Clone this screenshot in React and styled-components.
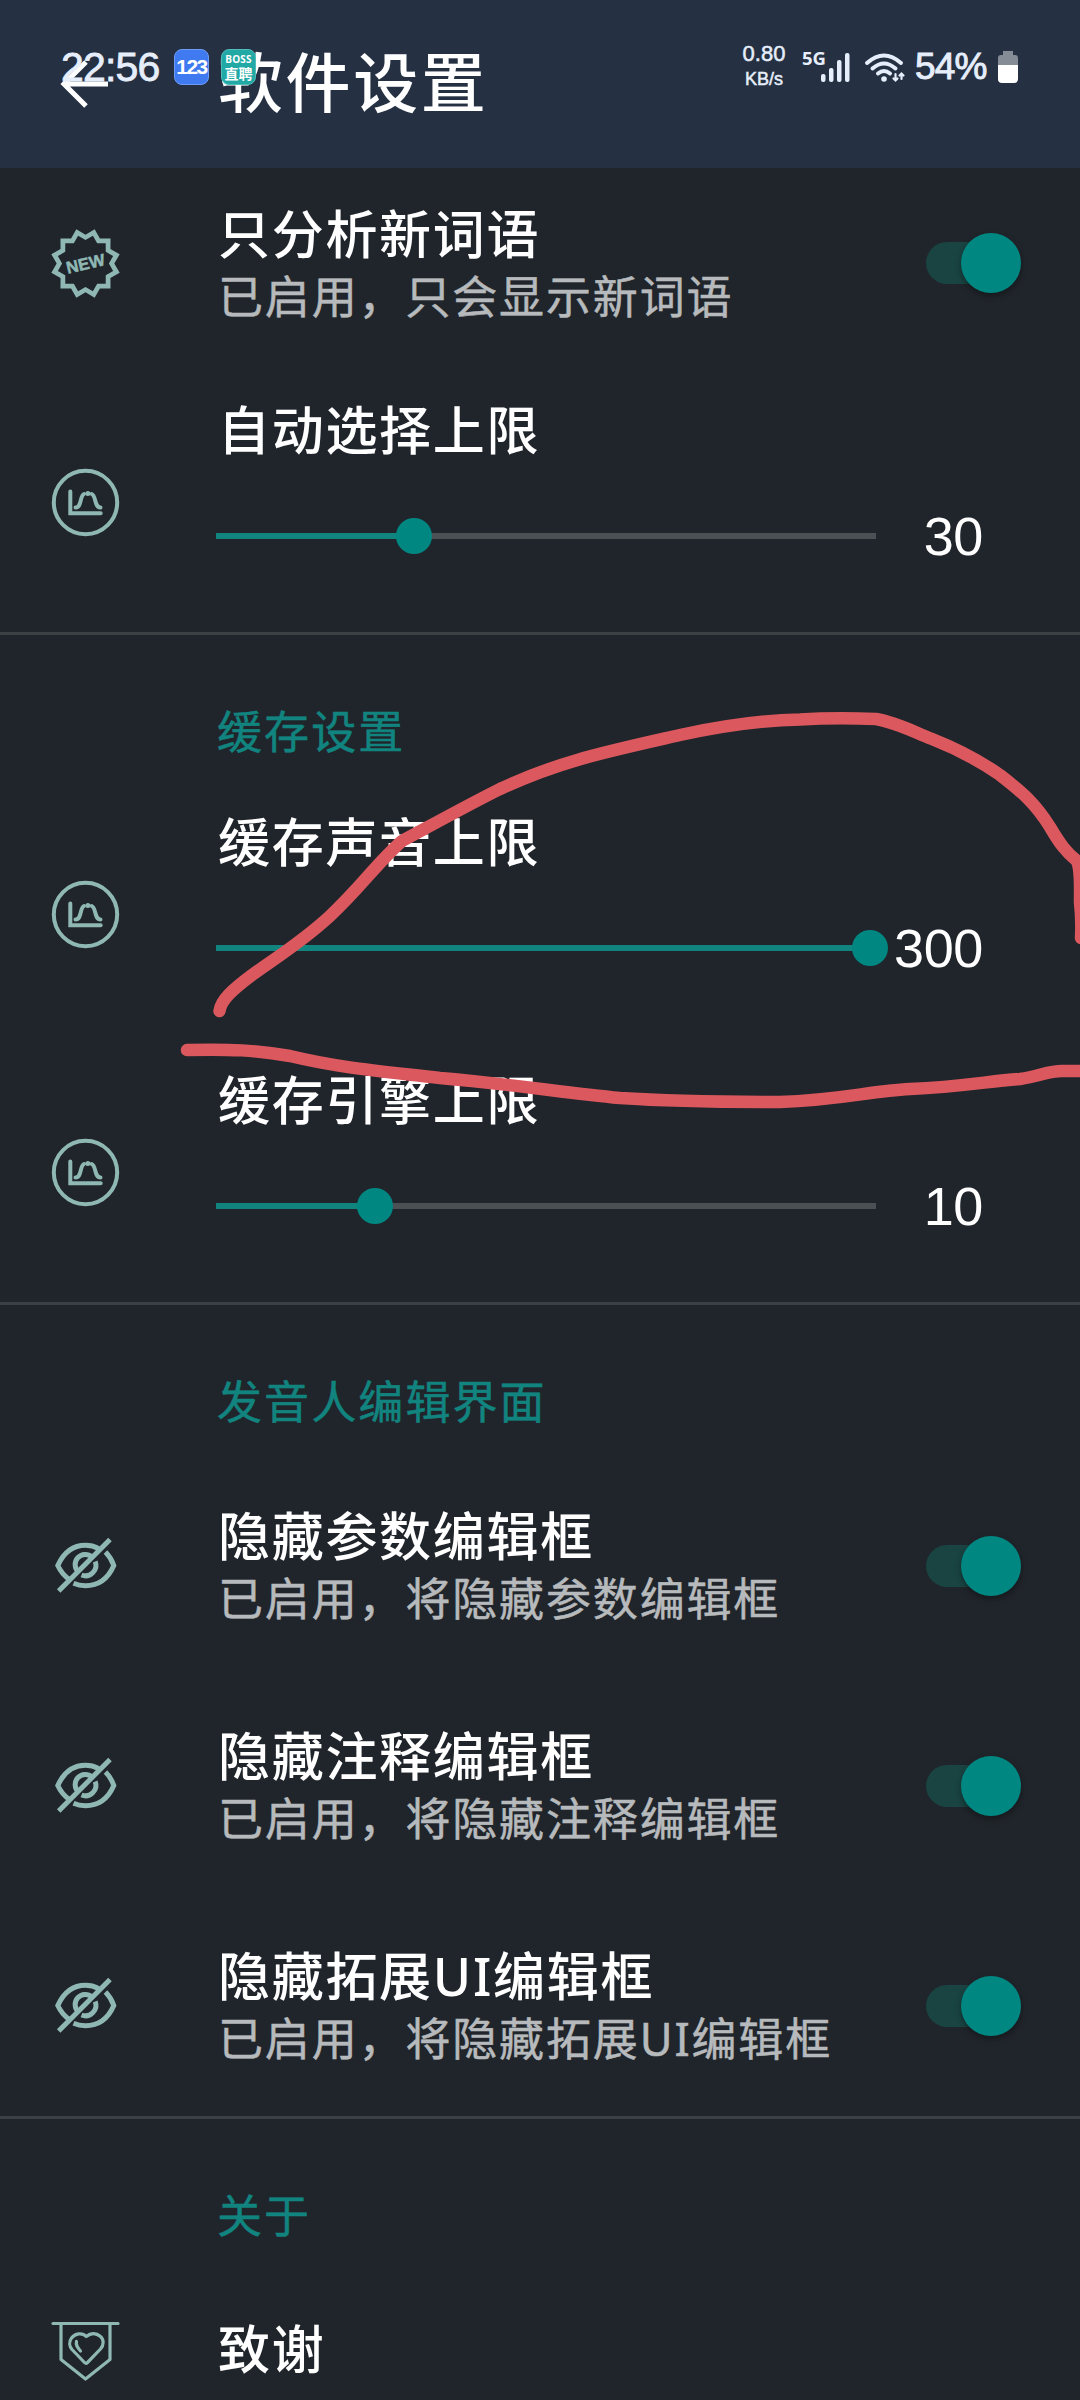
import React from 'react';
import styled, { createGlobalStyle } from 'styled-components';

const MINT = '#8fb8b5';
const TEAL = '#008782';
const TEAL_SOFT = '#12847f';

const Global = createGlobalStyle`
  * { box-sizing: border-box; }
  html, body { margin: 0; padding: 0; background: #20252b; }
  body {
    font-family: "Liberation Sans", "Noto Sans CJK SC", sans-serif;
    color: #fff;
  }
  svg { display: block; overflow: visible; }
`;

const Screen = styled.div`
  position: relative;
  width: 1080px;
  height: 2400px;
  overflow: hidden;
  background: #20252b;
  display: flex;
  flex-direction: column;
`;

const AppBar = styled.header`
  flex: none;
  height: 168px;
  background: #253142;
  display: flex;
  align-items: center;
  padding: 2px 0 0 60px;
`;

const BackIcon = styled.svg`
  width: 52px;
  height: 52px;
`;

const AppTitle = styled.h1`
  margin: 0 0 0 106px;
  font-size: 65px;
  line-height: 80px;
  font-weight: 500;
  letter-spacing: 2.6px;
  white-space: nowrap;
`;

const StatusBar = styled.div`
  position: absolute;
  left: 0;
  top: 40px;
  width: 1080px;
  height: 56px;
  padding: 0 62px 0 61px;
  display: flex;
  align-items: center;
  color: #e6eefb;
`;

const Clock = styled.span`
  width: 113px;
  font-size: 41px;
  line-height: 50px;
  margin-top: -3px;
  letter-spacing: -0.8px;
  -webkit-text-stroke: 0.8px currentColor;
`;

const Badge = styled.span`
  width: 35px;
  height: 36px;
  margin-top: -2px;
  border-radius: 8px;
  border: 1px solid ${(p) => p.$edge};
  background: ${(p) => p.$bg};
  color: #fff;
  display: flex;
  flex-direction: column;
  align-items: center;
  justify-content: center;
  margin-right: 12px;
`;

const BadgeDigits = styled.span`
  font: bold 21px/24px "Liberation Sans", sans-serif;
  letter-spacing: -1.5px;
`;

const BadgeLatin = styled.span`
  font: bold 10px/11px "Open Sans", sans-serif;
  letter-spacing: 0.2px;
`;

const BadgeHan = styled.span`
  font: bold 14px/16px "Noto Sans CJK SC", sans-serif;
`;

const StatusRight = styled.div`
  margin-left: auto;
  display: flex;
  align-items: center;
`;

const NetSpeed = styled.div`
  width: 44px;
  display: flex;
  flex-direction: column;
  align-items: center;
  margin-right: 15px;
  margin-top: -4px;
  -webkit-text-stroke: 0.5px currentColor;
`;

const SpeedValue = styled.span`
  font-size: 22px;
  line-height: 26px;
`;

const SpeedUnit = styled.span`
  font-size: 18px;
  line-height: 25px;
`;

const StatusGlyph = styled.svg`
  margin-right: ${(p) => p.$gap || 0}px;
`;

const Percent = styled.span`
  width: 75px;
  font-size: 37px;
  line-height: 44px;
  letter-spacing: -0.8px;
  margin-right: 8px;
  margin-top: -2px;
  white-space: nowrap;
  -webkit-text-stroke: 0.9px currentColor;
`;

const List = styled.main`
  flex: 1;
  min-height: 0;
  overflow: hidden;
  display: flex;
  flex-direction: column;
`;

const Row = styled.section`
  flex: none;
  height: ${(p) => p.$h}px;
  margin-top: ${(p) => p.$shift || 0}px;
  display: flex;
  align-items: center;
  padding-left: 51px;
`;

const IconSlot = styled.div`
  flex: none;
  width: 167px;
  margin-top: -1px;
`;

const Texts = styled.div`
  flex: 1;
  display: flex;
  flex-direction: column;
  padding-top: 2px;
`;

const Title = styled.div`
  font-family: "Noto Sans", "Noto Sans CJK SC", sans-serif;
  font-size: 52px;
  line-height: 64px;
  font-weight: 500;
  letter-spacing: 1.7px;
  margin-top: ${(p) => p.$lift || 0}px;
  white-space: nowrap;
`;

const Summary = styled.div`
  font-family: "Noto Sans", "Noto Sans CJK SC", sans-serif;
  font-size: 45px;
  line-height: 62px;
  letter-spacing: 1.85px;
  color: #b7babc;
  white-space: nowrap;
  -webkit-text-stroke: 0.5px currentColor;
`;

const SwitchTrack = styled.div`
  flex: none;
  width: 84px;
  height: 42px;
  margin: -1px 70px 0 0;
  border-radius: 21px;
  background: #194442;
  display: flex;
  align-items: center;
`;

const SwitchThumb = styled.div`
  flex: none;
  width: 60px;
  height: 60px;
  margin-left: 35px;
  border-radius: 50%;
  background: ${TEAL};
  box-shadow: 0 3px 6px rgba(0, 0, 0, 0.35);
`;

const SliderBody = styled.div`
  flex: 1;
  height: 100%;
  padding-top: 24px;
  display: flex;
  flex-direction: column;
`;

const SliderLine = styled.div`
  height: 60px;
  margin-top: 44px;
  margin-left: -2px;
  display: flex;
  align-items: center;
`;

const Track = styled.div`
  flex: none;
  width: 660px;
  height: 6px;
  display: flex;
  align-items: center;
  background: #4b5054;
`;

const Filled = styled.div`
  flex: none;
  height: 6px;
  background: ${TEAL_SOFT};
`;

const Knob = styled.div`
  flex: none;
  width: 36px;
  height: 36px;
  margin-left: -18px;
  border-radius: 50%;
  background: ${TEAL};
`;

const Value = styled.span`
  width: 107px;
  margin-top: -1px;
  text-align: right;
  font-size: 54px;
  line-height: 60px;
  letter-spacing: -0.4px;
`;

const Divider = styled.hr`
  flex: none;
  width: 100%;
  height: 3px;
  margin: 0;
  border: 0;
  background: #3b4045;
`;

const SectionHead = styled.h2`
  flex: none;
  height: 151px;
  margin: 0;
  padding: 67px 0 0 217px;
  font-size: 45px;
  line-height: 64px;
  font-weight: 400;
  letter-spacing: 2.1px;
  color: ${TEAL_SOFT};
  -webkit-text-stroke: 0.5px currentColor;
`;

const Ink = styled.svg`
  position: absolute;
  left: 0;
  top: 680px;
  pointer-events: none;
`;

const star = (tip, notch) =>
  'M' +
  Array.from({ length: 24 }, (_, i) => {
    const r = i % 2 ? tip : notch;
    const a = (Math.PI * i) / 12;
    return `${(34.5 + r * Math.cos(a)).toFixed(2)} ${(34.5 + r * Math.sin(a)).toFixed(2)}`;
  }).join('L') +
  'Z';

const NewIcon = () => (
  <svg width="69" height="69" viewBox="0 0 69 69" fill={MINT}>
    <path d={star(35.4, 28.8) + star(28.6, 23.4)} fillRule="evenodd" />
    <text x="34.5" y="40.5" textAnchor="middle" transform="rotate(-13 34.5 34.5)" stroke={MINT} strokeWidth="0.5"
      fontFamily="Liberation Sans, sans-serif" fontWeight="700" fontSize="16.8">NEW</text>
  </svg>
);

const CurveIcon = () => (
  <svg width="69" height="69" viewBox="0 0 69 69" fill="none" stroke={MINT} strokeWidth="4" strokeLinecap="round">
    <circle cx="34.5" cy="34.5" r="31.7" />
    <path d="M19.3 23.5V45.2H49.7" strokeLinejoin="miter" />
    <path d="M24.5 39.5C31 39.5 28.5 28 33 26M40.700 26C45.500 28 43 39.500 49.500 39.500" />
    <circle cx="36.900" cy="25.500" r="2.500" fill={MINT} stroke="none" />
  </svg>
);

const HiddenEyeIcon = () => (
  <svg width="69" height="69" viewBox="0 0 69 69" fill="none" stroke={MINT} strokeWidth="5">
    <path d="M18.5 48.5Q11 43.5 6.800 34.500Q16 14.300 34.500 14.300Q41.500 14.300 47.500 17.500" />
    <path d="M54.500 21Q60 26.500 62.800 34.500Q54 54.700 34.500 54.700Q28 54.700 22.500 52.300" />
    <path d="M27.500 41A10 10 0 0 1 41 26" />
    <path d="M44.200 30.500A10.500 10.500 0 0 1 30.500 44" />
    <path d="M7.700 60L59 8.500" />
  </svg>
);

const ThanksIcon = () => (
  <svg width="69" height="60" viewBox="0 0 69 60" fill="none" stroke={MINT} strokeWidth="3.200" strokeLinecap="round" strokeLinejoin="round">
    <path d="M2 2.500H67" />
    <path d="M10 3V38.500L34.500 58L59 38.500V3" />
    <path d="M35.200 15.500C31 11 24 12.500 20.500 17C17.500 21 18.500 25.500 21 28.500L33.500 41.500Q35 43 36.500 41.500L49.500 28C53 24 53 18.500 49.500 15.500C45 11.500 39.500 12 35.200 15.500Z" />
    <path d="M25.500 20.500C24.500 24 26.500 26.500 29.500 30" />
  </svg>
);

const Toggle = () => (
  <SwitchTrack role="switch" aria-checked="true">
    <SwitchThumb />
  </SwitchTrack>
);

const SwitchRow = ({ icon, title, summary, shift, height = 220 }) => (
  <Row $h={height} $shift={shift}>
    <IconSlot>{icon}</IconSlot>
    <Texts>
      <Title>{title}</Title>
      <Summary>{summary}</Summary>
    </Texts>
    <Toggle />
  </Row>
);

const SliderRow = ({ title, value, at }) => (
  <Row $h={258}>
    <IconSlot><CurveIcon /></IconSlot>
    <SliderBody>
      <Title>{title}</Title>
      <SliderLine>
        <Track>
          <Filled style={{ width: at }} />
          <Knob />
        </Track>
        <Value>{value}</Value>
      </SliderLine>
    </SliderBody>
  </Row>
);

export default function App() {
  return (
    <Screen>
      <Global />
      <AppBar>
        <BackIcon viewBox="0 0 52 52" fill="none" stroke="#fff" strokeWidth="5">
          <path d="M48 25H5M26 3L4 25L26 47" />
        </BackIcon>
        <AppTitle>软件设置</AppTitle>
      </AppBar>

      <List>
        <SwitchRow icon={<NewIcon />} title="只分析新词语" summary="已启用，只会显示新词语" height={221} shift={-15} />
        <SliderRow title="自动选择上限" value="30" at={198} />
        <Divider />
        <SectionHead>缓存设置</SectionHead>
        <SliderRow title="缓存声音上限" value="300" at={654} />
        <SliderRow title="缓存引擎上限" value="10" at={159} />
        <Divider />
        <SectionHead>发音人编辑界面</SectionHead>
        <SwitchRow icon={<HiddenEyeIcon />} title="隐藏参数编辑框" summary="已启用，将隐藏参数编辑框" />
        <SwitchRow icon={<HiddenEyeIcon />} title="隐藏注释编辑框" summary="已启用，将隐藏注释编辑框" />
        <SwitchRow icon={<HiddenEyeIcon />} title="隐藏拓展UI编辑框" summary="已启用，将隐藏拓展UI编辑框" />
        <Divider />
        <SectionHead>关于</SectionHead>
        <Row $h={162}>
          <IconSlot><ThanksIcon /></IconSlot>
          <Title $lift={-5}>致谢</Title>
        </Row>
      </List>

      <StatusBar>
        <Clock>22:56</Clock>
        <Badge $bg="#3f7af0" $edge="#6d9bf5"><BadgeDigits>123</BadgeDigits></Badge>
        <Badge $bg="#22a8a5" $edge="#4fbdba">
          <BadgeLatin>BOSS</BadgeLatin>
          <BadgeHan>直聘</BadgeHan>
        </Badge>
        <StatusRight>
          <NetSpeed>
            <SpeedValue>0.80</SpeedValue>
            <SpeedUnit>KB/s</SpeedUnit>
          </NetSpeed>
          <StatusGlyph $gap={13} width="50" height="34" viewBox="0 0 50 34" fill="#e6eefb">
            <text x="1" y="14" fontFamily="Open Sans, sans-serif" fontWeight="700" fontSize="18.500">5G</text>
            <rect x="20" y="23" width="4.500" height="8" rx="2" />
            <rect x="28" y="17" width="4.500" height="14" rx="2" />
            <rect x="36" y="9" width="4.500" height="22" rx="2" />
            <rect x="44" y="2" width="4.500" height="29" rx="2" />
          </StatusGlyph>
          <StatusGlyph $gap={9} width="42" height="34" viewBox="0 0 42 34" fill="none" stroke="#e6eefb" strokeWidth="4" strokeLinecap="round">
            <path d="M3 12Q20 -3 37 12" />
            <path d="M8.500 17.500Q20 7.500 31.500 17.500" />
            <path d="M14 22.500Q20 17.500 26 22.500" />
            <circle cx="20" cy="28" r="2.800" fill="#e6eefb" stroke="none" />
            <path d="M31.500 23V29.500M29.500 27.500L31.500 29.500L33.500 27.500M37.500 28V22.500M35.500 24.500L37.500 22.500L39.500 24.500" strokeWidth="2.200" />
          </StatusGlyph>
          <Percent>54%</Percent>
          <svg width="20" height="34" viewBox="0 0 20 34">
            <path d="M5 0H15V4H17Q20 4 20 7V15H0V7Q0 4 3 4H5Z" fill="#858c96" />
            <path d="M0 14H20V28Q20 32 16 32H4Q0 32 0 28Z" fill="#fff" />
          </svg>
        </StatusRight>
      </StatusBar>

      <Ink width="1080" height="460" viewBox="0 0 1080 460" fill="none" stroke="#db595e" strokeWidth="12.500" strokeLinecap="round" strokeLinejoin="round">
        <path d="M219.500 331C221 320 232 310 252 295C280 275 303 261 330 236C362 206 376 184 402 161C430 146 466 126 500 109C560 81 605 72 680 55C730 44 770 40 800 39.500C825 38 850 38 876 39C895 42 912 51 932 59C960 70 980 81 1000 95C1022 112 1035 123 1050 147C1060 164 1066 172 1077 181C1081 190 1080 205 1080 222Q1082 240 1081 258" />
        <path d="M187 370C230 369 255 370 290 376C340 388 380 391 440 398C510 404 560 412 620 418C680 422 730 422 780 422C840 420 870 411 910 409C960 407 990 401 1020 399C1040 396 1048 391 1062 391H1090" />
      </Ink>
    </Screen>
  );
}
